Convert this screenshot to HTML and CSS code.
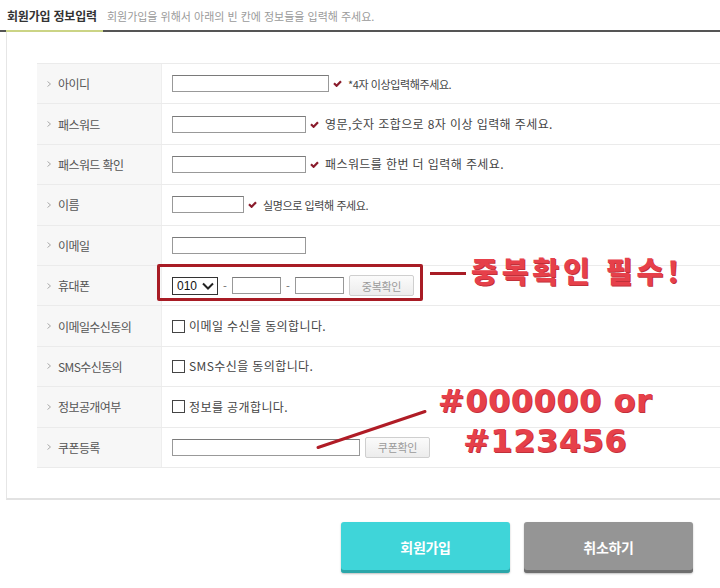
FILE: index.html
```html
<!DOCTYPE html>
<html lang="ko">
<head>
<meta charset="utf-8">
<title>회원가입 정보입력</title>
<link rel="stylesheet" href="styles.css">
</head>
<body>
<div class="page">
  <header class="head">
    <h1 class="title">회원가입 정보입력</h1>
    <p class="desc">회원가입을 위해서 아래의 빈 칸에 정보들을 입력해 주세요.</p>
  </header>

  <section class="box">
    <div class="form">
      <div class="row">
        <div class="label"><svg class="arr" width="4" height="6" viewBox="0 0 4 6"><path d="M0.5 0.5L3.5 3L0.5 5.5" fill="none" stroke="#aaa" stroke-width="1"/></svg>아이디</div>
        <div class="field"><span class="inp w157"></span><svg class="chk" width="9" height="7" viewBox="0 0 9 7"><path d="M1 3.3L3.6 5.8L8 1.2" fill="none" stroke="#8a1c2c" stroke-width="2.2"/></svg><span class="hint">*4자 이상입력해주세요.</span></div>
      </div>
      <div class="row">
        <div class="label"><svg class="arr" width="4" height="6" viewBox="0 0 4 6"><path d="M0.5 0.5L3.5 3L0.5 5.5" fill="none" stroke="#aaa" stroke-width="1"/></svg>패스워드</div>
        <div class="field"><span class="inp w134"></span><svg class="chk" width="9" height="7" viewBox="0 0 9 7"><path d="M1 3.3L3.6 5.8L8 1.2" fill="none" stroke="#8a1c2c" stroke-width="2.2"/></svg><span class="hint wide">영문,숫자 조합으로 8자 이상 입력해 주세요.</span></div>
      </div>
      <div class="row">
        <div class="label"><svg class="arr" width="4" height="6" viewBox="0 0 4 6"><path d="M0.5 0.5L3.5 3L0.5 5.5" fill="none" stroke="#aaa" stroke-width="1"/></svg>패스워드 확인</div>
        <div class="field"><span class="inp w134"></span><svg class="chk" width="9" height="7" viewBox="0 0 9 7"><path d="M1 3.3L3.6 5.8L8 1.2" fill="none" stroke="#8a1c2c" stroke-width="2.2"/></svg><span class="hint wide">패스워드를 한번 더 입력해 주세요.</span></div>
      </div>
      <div class="row">
        <div class="label"><svg class="arr" width="4" height="6" viewBox="0 0 4 6"><path d="M0.5 0.5L3.5 3L0.5 5.5" fill="none" stroke="#aaa" stroke-width="1"/></svg>이름</div>
        <div class="field"><span class="inp w72"></span><svg class="chk" width="9" height="7" viewBox="0 0 9 7"><path d="M1 3.3L3.6 5.8L8 1.2" fill="none" stroke="#8a1c2c" stroke-width="2.2"/></svg><span class="hint">실명으로 입력해 주세요.</span></div>
      </div>
      <div class="row">
        <div class="label"><svg class="arr" width="4" height="6" viewBox="0 0 4 6"><path d="M0.5 0.5L3.5 3L0.5 5.5" fill="none" stroke="#aaa" stroke-width="1"/></svg>이메일</div>
        <div class="field"><span class="inp w134"></span></div>
      </div>
      <div class="row">
        <div class="label"><svg class="arr" width="4" height="6" viewBox="0 0 4 6"><path d="M0.5 0.5L3.5 3L0.5 5.5" fill="none" stroke="#aaa" stroke-width="1"/></svg>휴대폰</div>
        <div class="field">
          <span class="sel">010<svg width="12" height="8" viewBox="0 0 12 8"><path d="M1 1.5L6 6.5L11 1.5" fill="none" stroke="#222" stroke-width="2"/></svg></span>
          <span class="dash">-</span>
          <span class="inp w48"></span>
          <span class="dash">-</span>
          <span class="inp w48"></span>
          <span class="sbtn">중복확인</span>
        </div>
      </div>
      <div class="row">
        <div class="label"><svg class="arr" width="4" height="6" viewBox="0 0 4 6"><path d="M0.5 0.5L3.5 3L0.5 5.5" fill="none" stroke="#aaa" stroke-width="1"/></svg>이메일수신동의</div>
        <div class="field"><span class="cb"></span><span class="hint wide">이메일 수신을 동의합니다.</span></div>
      </div>
      <div class="row">
        <div class="label"><svg class="arr" width="4" height="6" viewBox="0 0 4 6"><path d="M0.5 0.5L3.5 3L0.5 5.5" fill="none" stroke="#aaa" stroke-width="1"/></svg>SMS수신동의</div>
        <div class="field"><span class="cb"></span><span class="hint wide">SMS수신을 동의합니다.</span></div>
      </div>
      <div class="row">
        <div class="label"><svg class="arr" width="4" height="6" viewBox="0 0 4 6"><path d="M0.5 0.5L3.5 3L0.5 5.5" fill="none" stroke="#aaa" stroke-width="1"/></svg>정보공개여부</div>
        <div class="field"><span class="cb"></span><span class="hint wide">정보를 공개합니다.</span></div>
      </div>
      <div class="row">
        <div class="label"><svg class="arr" width="4" height="6" viewBox="0 0 4 6"><path d="M0.5 0.5L3.5 3L0.5 5.5" fill="none" stroke="#aaa" stroke-width="1"/></svg>쿠폰등록</div>
        <div class="field"><span class="inp w188"></span><span class="sbtn">쿠폰확인</span></div>
      </div>
    </div>
  </section>

  <div class="actions">
    <button class="btn btn-join">회원가입</button>
    <button class="btn btn-cancel">취소하기</button>
  </div>

  <div class="mark-box"></div>
  <div class="mark-line"></div>
  <div class="note note-dup">중복확인 필수!</div>
  <svg class="mark-diag" width="120" height="45" viewBox="0 0 120 45"><path d="M3 39.5L110 3.5" stroke="#b01c26" stroke-width="3" stroke-linecap="round"/></svg>
  <div class="note note-hex">#000000 or<br>#123456</div>
</div>
</body>
</html>
```

FILE: styles.css
```css
* { box-sizing: border-box; }
html, body { margin: 0; padding: 0; background: #fff; }
body {
  font-family: "Noto Sans CJK KR", "Noto Sans", sans-serif;
  color: #444;
  overflow: hidden;
}
.page {
  position: relative;
  width: 720px;
  height: 588px;
}
.head {
  display: flex;
  align-items: flex-end;
  height: 32px;
  padding-left: 6px;
  border-bottom: 2px solid #555;
}
.title {
  margin: 0 0 -2px 0;
  padding: 0 6px 5px 1px;
  font-size: 12px;
  line-height: 18px;
  font-weight: 700;
  color: #333;
  letter-spacing: -0.2px;
  border-bottom: 2px solid #cbd485;
}
.desc {
  margin: 0 0 5px 4px;
  font-size: 11px;
  line-height: 18px;
  color: #9a9a9a;
  letter-spacing: 0;
}
.box {
  margin-left: 6px;
  border-left: 1px solid #e6e6e6;
  border-bottom: 2px solid #e2e2e2;
  padding: 31px 0 30px 30px;
}
.form {
  border-bottom: 1px solid #ebebeb;
}
.row {
  display: grid;
  grid-template-columns: 125px 1fr;
  height: 40.4px;
  border-top: 1px solid #ebebeb;
}
.label {
  display: flex;
  align-items: center;
  padding-left: 10px;
  background: #f7f7f7;
  border-right: 1px solid #eeeeee;
  font-size: 12px;
  color: #555;
  letter-spacing: -0.6px;
}
.arr { margin-right: 7px; flex: none; }
.field {
  display: flex;
  align-items: center;
  padding-left: 10px;
  font-size: 12px;
}
.inp {
  display: inline-block;
  height: 17px;
  border: 1px solid #999;
  border-top-color: #7a7a7a;
  background: #fff;
  flex: none;
}
.w157 { width: 157px; }
.w134 { width: 134px; }
.w72 { width: 72px; }
.w188 { width: 188px; }
.w48 { width: 49px; }
.chk { margin: 0 6px 0 4px; flex: none; }
.hint {
  font-size: 11px;
  color: #444;
  letter-spacing: -0.4px;
  line-height: 16px;
}
.hint.wide {
  font-size: 12px;
  letter-spacing: 0.4px;
}
.cb {
  display: inline-block;
  width: 13px;
  height: 13px;
  border: 1px solid #444;
  margin-right: 4px;
  flex: none;
}
.sel {
  display: inline-flex;
  align-items: center;
  justify-content: space-between;
  width: 46px;
  height: 18px;
  padding: 0 3px 0 4px;
  border: 1px solid #333;
  font-family: "Liberation Sans", sans-serif;
  font-size: 12px;
  color: #111;
}
.dash {
  width: 14px;
  text-align: center;
  color: #666;
  font-size: 11px;
}
.sbtn {
  display: inline-flex;
  align-items: center;
  justify-content: center;
  width: 65px;
  height: 21px;
  margin-left: 5px;
  border: 1px solid #cfcfcf;
  border-radius: 2px;
  background: linear-gradient(#fbfbfb, #ececec);
  font-size: 11px;
  color: #9a9a9a;
  letter-spacing: -0.3px;
}
.actions {
  display: flex;
  justify-content: flex-end;
  gap: 14px;
  padding: 22px 27px 0 0;
}
.btn {
  width: 169px;
  height: 51px;
  border: 0;
  border-radius: 3px;
  font-family: "Noto Sans CJK KR", sans-serif;
  font-size: 14px;
  font-weight: 700;
  color: #fff;
  letter-spacing: -0.3px;
}
.btn-join {
  background: #3fd5d9;
  box-shadow: inset 0 -3px 0 #2ba6a9, 0 1px 2px rgba(0,0,0,0.25);
}
.btn-cancel {
  background: #959595;
  box-shadow: inset 0 -3px 0 #6e6e6e, 0 1px 2px rgba(0,0,0,0.25);
}
.mark-box {
  position: absolute;
  left: 157px;
  top: 264px;
  width: 266px;
  height: 37px;
  border: 3px solid #a81c25;
  border-radius: 2px;
}
.mark-line {
  position: absolute;
  left: 430px;
  top: 272px;
  width: 36px;
  height: 3px;
  background: #a81c25;
}
.mark-diag {
  position: absolute;
  left: 315px;
  top: 408px;
}
.note {
  position: absolute;
  color: #e6404a;
  font-weight: 900;
  text-shadow: 1px 1px 0 #c0303a;
}
.note-dup {
  left: 471px;
  top: 252px;
  font-family: "Noto Sans CJK KR", sans-serif;
  font-size: 29px;
  line-height: 36px;
  letter-spacing: 4px;
}
.note-hex {
  left: 425px;
  top: 381px;
  width: 240px;
  text-align: center;
  font-family: "DejaVu Sans", sans-serif;
  font-weight: 700;
  font-size: 32px;
  line-height: 40px;
  letter-spacing: 0.5px;
}
```
